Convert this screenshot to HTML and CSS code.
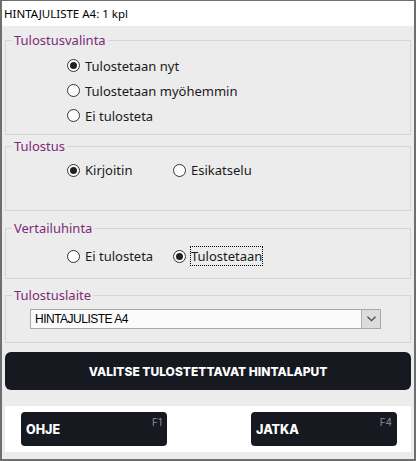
FILE: index.html
```html
<!DOCTYPE html>
<html lang="fi">
<head>
<meta charset="utf-8">
<title>Hintajuliste</title>
<link rel="stylesheet" href="styles.css">
</head>
<body>
<div class="window">
  <div class="titlebar">HINTAJULISTE A4: 1 kpl</div>
  <div class="content">
    <fieldset class="group g1">
      <legend>Tulostusvalinta</legend>
      <div class="stack">
        <div class="opt"><span class="radio checked"></span><span>Tulostetaan nyt</span></div>
        <div class="opt"><span class="radio"></span><span>Tulostetaan myöhemmin</span></div>
        <div class="opt"><span class="radio"></span><span>Ei tulosteta</span></div>
      </div>
    </fieldset>
    <fieldset class="group g2">
      <legend>Tulostus</legend>
      <div class="pair">
        <div class="opt row24"><span class="radio checked"></span><span>Kirjoitin</span></div>
        <div class="opt row24"><span class="radio"></span><span>Esikatselu</span></div>
      </div>
    </fieldset>
    <fieldset class="group g3">
      <legend>Vertailuhinta</legend>
      <div class="pair">
        <div class="opt row24"><span class="radio"></span><span>Ei tulosteta</span></div>
        <div class="opt row24"><span class="radio checked"></span><span class="focus">Tulostetaan</span></div>
      </div>
    </fieldset>
    <fieldset class="group g4">
      <legend>Tulostuslaite</legend>
      <div class="select">
        <span class="select-text">HINTAJULISTE A4</span>
        <span class="select-arrow"><svg width="9" height="6" viewBox="0 0 9 6"><path d="M0.5 0.8 L4.5 4.6 L8.5 0.8" fill="none" stroke="#444" stroke-width="1.2"/></svg></span>
      </div>
    </fieldset>
    <button class="primary">VALITSE TULOSTETTAVAT HINTALAPUT</button>
    <div class="footer">
      <button class="fbtn">OHJE<span class="key">F1</span></button>
      <button class="fbtn">JATKA<span class="key">F4</span></button>
    </div>
  </div>
</div>
</body>
</html>
```
FILE: styles.css
```css
* { box-sizing: border-box; }
html, body { margin: 0; padding: 0; }
body {
  width: 416px;
  height: 461px;
  font-family: "Noto Sans", "Open Sans", sans-serif;
  color: #1a1a1a;
}
.window {
  width: 416px;
  height: 461px;
  border-style: solid;
  border-color: #6e6e6e;
  border-width: 1px 2px 2px 2px;
  background: #ececec;
  display: flex;
  flex-direction: column;
}
.titlebar {
  height: 25px;
  background: #ffffff;
  font-size: 11.5px;
  line-height: 25px;
  padding-left: 2px;
  color: #000;
}
.content {
  padding: 6px 3px 0 3px;
  display: flex;
  flex-direction: column;
}
.group {
  margin: 0;
  border: 1px solid #d6d6d6;
  padding: 0 6px;
  min-width: 0;
}
.group legend {
  font-size: 13px;
  line-height: 16px;
  height: 16px;
  padding: 0 2px;
  color: #7d2a76;
}
.g1 { padding-top: 5px; padding-bottom: 6px; }
.g2 { margin-top: 3px; padding-top: 4px; padding-bottom: 28px; }
.g3 { margin-top: 9px; padding-top: 8px; padding-bottom: 10px; }
.g4 { margin-top: 8px; padding-top: 6px; padding-bottom: 13px; }
.stack {
  display: flex;
  flex-direction: column;
  margin-left: 55px;
}
.pair {
  display: grid;
  grid-template-columns: 106px auto;
  margin-left: 55px;
}
.opt {
  height: 25px;
  display: flex;
  align-items: center;
  gap: 5px;
  font-size: 13px;
  color: #1a1a1a;
}
.opt.row24 { height: 24px; }
.radio {
  width: 13px;
  height: 13px;
  border: 1px solid #333;
  border-radius: 50%;
  background: #fff;
  flex: none;
  display: flex;
  align-items: center;
  justify-content: center;
}
.radio.checked::after {
  content: "";
  width: 7px;
  height: 7px;
  border-radius: 50%;
  background: #222;
}
.focus {
  outline: 1px dotted #000;
  line-height: 18px;
}
.select {
  margin-left: 18px;
  width: 351px;
  height: 20px;
  border: 1px solid #a8a8a8;
  background: #fbfbfb;
  display: flex;
  align-items: center;
}
.select-text {
  flex: 1;
  padding-left: 4px;
  font-family: "Liberation Sans", Arial, sans-serif;
  font-size: 12px;
  letter-spacing: -0.5px;
  color: #000;
}
.select-arrow {
  width: 19px;
  height: 18px;
  background: #dcdcdc;
  border-left: 1px solid #b0b0b0;
  display: flex;
  align-items: center;
  justify-content: center;
}
.primary {
  margin-top: 9px;
  height: 38px;
  width: 100%;
  border: none;
  border-radius: 6px;
  background: #161920;
  color: #fff;
  font-family: "Inter", "Noto Sans", sans-serif;
  font-weight: 800;
  font-size: 12px;
  padding: 0;
}
.footer {
  margin-top: 16px;
  height: 46px;
  background: #fff;
  display: flex;
  justify-content: space-between;
  align-items: center;
  padding: 0 14px 0 16px;
}
.fbtn {
  position: relative;
  width: 146px;
  height: 34px;
  border: none;
  border-radius: 4px;
  background: #161920;
  color: #fff;
  font-family: "Inter", "Noto Sans", sans-serif;
  font-weight: 800;
  font-size: 12.5px;
  text-align: left;
  padding: 0 0 0 5px;
}
.key {
  position: absolute;
  top: 4px;
  right: 5px;
  font-size: 10px;
  font-weight: 400;
  color: #8a8d93;
}
```
